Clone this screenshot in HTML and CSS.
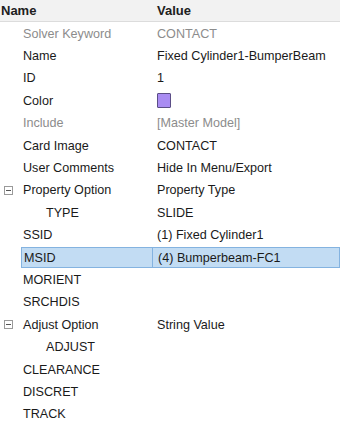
FILE: index.html
```html
<html>
<head>
	<meta charset="utf-8">
	<title>Properties</title>
	<link rel="stylesheet" href="styles.css">
</head>
<body>
	<div class="grid">
		<div class="head">
			<div class="hname">Name</div>
			<div class="hvalue">Value</div>
		</div>
		<div class="row dim"><div class="name">Solver Keyword</div><div class="value">CONTACT</div></div>
		<div class="row"><div class="name">Name</div><div class="value">Fixed Cylinder1-BumperBeam</div></div>
		<div class="row"><div class="name">ID</div><div class="value">1</div></div>
		<div class="row"><div class="name">Color</div><div class="value"><span class="swatch"></span></div></div>
		<div class="row dim"><div class="name">Include</div><div class="value">[Master Model]</div></div>
		<div class="row"><div class="name">Card Image</div><div class="value">CONTACT</div></div>
		<div class="row"><div class="name">User Comments</div><div class="value">Hide In Menu/Export</div></div>
		<div class="row"><div class="name"><span class="toggle"></span>Property Option</div><div class="value">Property Type</div></div>
		<div class="row"><div class="name sub">TYPE</div><div class="value">SLIDE</div></div>
		<div class="row"><div class="name">SSID</div><div class="value">(1) Fixed Cylinder1</div></div>
		<div class="row selected"><div class="name">MSID</div><div class="value">(4) Bumperbeam-FC1</div></div>
		<div class="row"><div class="name">MORIENT</div><div class="value"></div></div>
		<div class="row"><div class="name">SRCHDIS</div><div class="value"></div></div>
		<div class="row"><div class="name"><span class="toggle"></span>Adjust Option</div><div class="value">String Value</div></div>
		<div class="row"><div class="name sub">ADJUST</div><div class="value"></div></div>
		<div class="row"><div class="name">CLEARANCE</div><div class="value"></div></div>
		<div class="row"><div class="name">DISCRET</div><div class="value"></div></div>
		<div class="row"><div class="name">TRACK</div><div class="value"></div></div>
	</div>
</body>
</html>
```

FILE: styles.css
```css
*{
	box-sizing: border-box;
	margin: 0;
	padding: 0;
}
body
{
	background: #fff;
	font-family: "Liberation Sans", Arial, sans-serif;
	font-size: 12.6px;
	color: #1a1a1a;
	overflow: hidden;
}
.head
{
	display: grid;
	grid-template-columns: 152px 1fr;
	height: 22px;
	align-items: center;
	background: #f2f2f2;
	border-bottom: 1px solid #dcdcdc;
	font-weight: bold;
	font-size: 13px;
	color: #202020;
}
.hname
{
	padding-left: 1px;
}
.hvalue
{
	padding-left: 5px;
}
.row
{
	display: grid;
	grid-template-columns: 152px 1fr;
	height: 22.4px;
	align-items: stretch;
}
.row .name,
.row .value
{
	display: flex;
	align-items: center;
	white-space: nowrap;
	padding-top: 1px;
}
.row .name
{
	padding-left: 23px;
	position: relative;
}
.row .name.sub
{
	padding-left: 46px;
}
.row .value
{
	padding-left: 5px;
}
.row.dim
{
	color: #8c8c8c;
}
.toggle
{
	position: absolute;
	left: 4px;
	top: 7px;
	width: 9px;
	height: 9px;
	border: 1px solid #9a9a9a;
	background: #fff;
}
.toggle::after
{
	content: "";
	position: absolute;
	left: 1px;
	top: 3px;
	width: 5px;
	height: 1px;
	background: #555;
}
.swatch
{
	display: inline-block;
	width: 14px;
	height: 15px;
	background: #a98cf2;
	border: 1px solid #5b4e86;
	border-radius: 1px;
}
.row.selected .name
{
	margin-left: 21px;
	padding-left: 2px;
	background: #c2dcf3;
	border: 1px solid #84b3e0;
	border-right: 0;
	margin-top: 1px;
}
.row.selected .value
{
	background: #c2dcf3;
	border: 1px solid #84b3e0;
	margin-top: 1px;
}
```
